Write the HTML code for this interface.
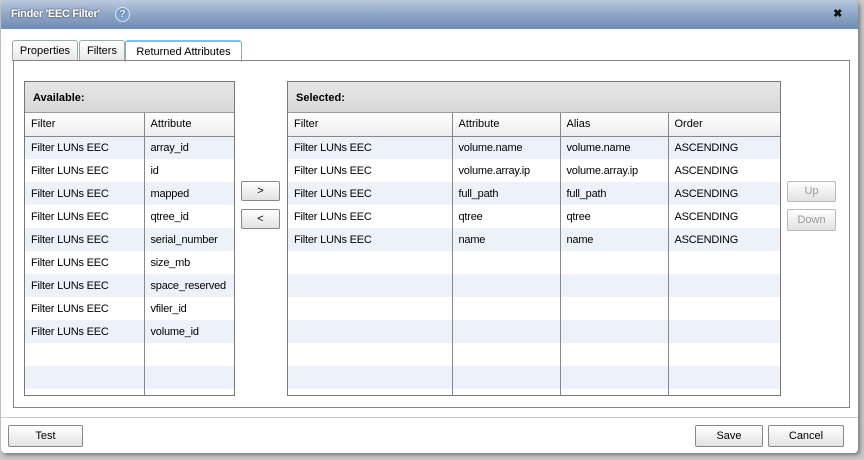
<!DOCTYPE html>
<html><head><style>
*{box-sizing:border-box;margin:0;padding:0}
body{width:864px;height:460px;background:#c8c8c8;font-family:"Liberation Sans",sans-serif;font-size:11px;color:#000;position:relative;overflow:hidden}
.dlg{position:absolute;left:1px;top:0;width:857px;height:453px;background:#fff;border-radius:6px 6px 4px 4px;box-shadow:2px 2px 4px #777}
.title{position:absolute;left:0;top:0;width:857px;height:29px;border-radius:6px 6px 0 0;background:linear-gradient(#b9c9df,#8ea6c6 50%,#6f8cb5);color:#fff;font-weight:bold;font-size:11px;line-height:29px;padding-left:10px;text-shadow:0 0 2px #333;letter-spacing:-0.3px}
.q{position:absolute;left:114px;top:7px;width:15px;height:15px;border-radius:50%;background:#7fa2d4;border:1px solid #dde8f5;color:#fff;font-size:10px;line-height:13px;text-align:center;letter-spacing:0}
.x{position:absolute;right:16px;top:0;font-size:11px;color:#111;text-shadow:none}
.tab{position:absolute;top:40px;height:21px;border:1px solid #9aa;border-bottom:none;background:linear-gradient(#fff,#e8e8e8);line-height:20px;text-align:center;border-radius:3px 3px 0 0;font-size:11px}
.panel{position:absolute;left:12px;top:60px;width:837px;height:348px;border:1px solid #888}
.box{position:absolute;border:1px solid #777;background:#fff;overflow:hidden}
.hd{height:31px;background:linear-gradient(#e6e6e6,#d8d8d8);border-bottom:1px solid #999;font-weight:bold;padding:10px 0 0 8px}
table{border-collapse:collapse;width:100%;table-layout:fixed}
th{font-weight:normal;text-align:left;height:23px;background:linear-gradient(#fff,#eee);border-right:1px solid #888;border-bottom:1px solid #888;padding-left:6px}
td{height:23px;border-right:1px solid #888;padding-left:6px;white-space:nowrap;overflow:hidden;letter-spacing:-0.2px}
tr:nth-child(even) td{background:#edf2fa}
.btn{position:absolute;border:1px solid #888;border-radius:2px;background:linear-gradient(#fff,#e2e2e2);text-align:center;font-size:11px}
.dis{color:#999;border-color:#bbb}
</style></head><body>
<div class="dlg">
<div class="title">Finder 'EEC Filter'<div class="q">?</div><div class="x">✖</div></div>
<div class="tab" style="left:11px;width:66px">Properties</div>
<div class="tab" style="left:78px;width:46px">Filters</div>
<div class="tab" style="left:124px;width:117px;background:#fff;height:22px;border-top:2px solid #7cc0ee">Returned Attributes</div>
<div class="panel"></div>
<div class="box" style="left:23px;top:81px;width:211px;height:315px">
<div class="hd">Available:</div>
<table><tr><th style="width:119px">Filter</th><th style="border-right:none">Attribute</th></tr>
<tr><td>Filter LUNs EEC</td><td style="border-right:none">array_id</td></tr>
<tr><td>Filter LUNs EEC</td><td style="border-right:none">id</td></tr>
<tr><td>Filter LUNs EEC</td><td style="border-right:none">mapped</td></tr>
<tr><td>Filter LUNs EEC</td><td style="border-right:none">qtree_id</td></tr>
<tr><td>Filter LUNs EEC</td><td style="border-right:none">serial_number</td></tr>
<tr><td>Filter LUNs EEC</td><td style="border-right:none">size_mb</td></tr>
<tr><td>Filter LUNs EEC</td><td style="border-right:none">space_reserved</td></tr>
<tr><td>Filter LUNs EEC</td><td style="border-right:none">vfiler_id</td></tr>
<tr><td>Filter LUNs EEC</td><td style="border-right:none">volume_id</td></tr>
<tr><td></td><td style="border-right:none"></td></tr>
<tr><td></td><td style="border-right:none"></td></tr>
<tr><td></td><td style="border-right:none"></td></tr>
</table></div>
<div class="btn" style="left:240px;top:181px;width:39px;height:20px;line-height:18px">&gt;</div>
<div class="btn" style="left:240px;top:209px;width:39px;height:20px;line-height:18px">&lt;</div>
<div class="box" style="left:286px;top:81px;width:494px;height:315px">
<div class="hd">Selected:</div>
<table><tr><th style="width:164px">Filter</th><th style="width:108px">Attribute</th><th style="width:108px">Alias</th><th style="border-right:none">Order</th></tr>
<tr><td>Filter LUNs EEC</td><td>volume.name</td><td>volume.name</td><td style="border-right:none">ASCENDING</td></tr>
<tr><td>Filter LUNs EEC</td><td>volume.array.ip</td><td>volume.array.ip</td><td style="border-right:none">ASCENDING</td></tr>
<tr><td>Filter LUNs EEC</td><td>full_path</td><td>full_path</td><td style="border-right:none">ASCENDING</td></tr>
<tr><td>Filter LUNs EEC</td><td>qtree</td><td>qtree</td><td style="border-right:none">ASCENDING</td></tr>
<tr><td>Filter LUNs EEC</td><td>name</td><td>name</td><td style="border-right:none">ASCENDING</td></tr>
<tr><td></td><td></td><td></td><td style="border-right:none"></td></tr>
<tr><td></td><td></td><td></td><td style="border-right:none"></td></tr>
<tr><td></td><td></td><td></td><td style="border-right:none"></td></tr>
<tr><td></td><td></td><td></td><td style="border-right:none"></td></tr>
<tr><td></td><td></td><td></td><td style="border-right:none"></td></tr>
<tr><td></td><td></td><td></td><td style="border-right:none"></td></tr>
<tr><td></td><td></td><td></td><td style="border-right:none"></td></tr>
</table></div>
<div class="btn dis" style="left:786px;top:181px;width:49px;height:21px;line-height:19px">Up</div>
<div class="btn dis" style="left:786px;top:209px;width:49px;height:22px;line-height:20px">Down</div>
<div style="position:absolute;left:0;top:417px;width:857px;border-top:1px solid #ccc"></div>
<div class="btn" style="left:7px;top:425px;width:75px;height:22px;line-height:20px">Test</div>
<div class="btn" style="left:694px;top:425px;width:68px;height:22px;line-height:20px">Save</div>
<div class="btn" style="left:767px;top:425px;width:76px;height:22px;line-height:20px">Cancel</div>
</div>
</body></html>
